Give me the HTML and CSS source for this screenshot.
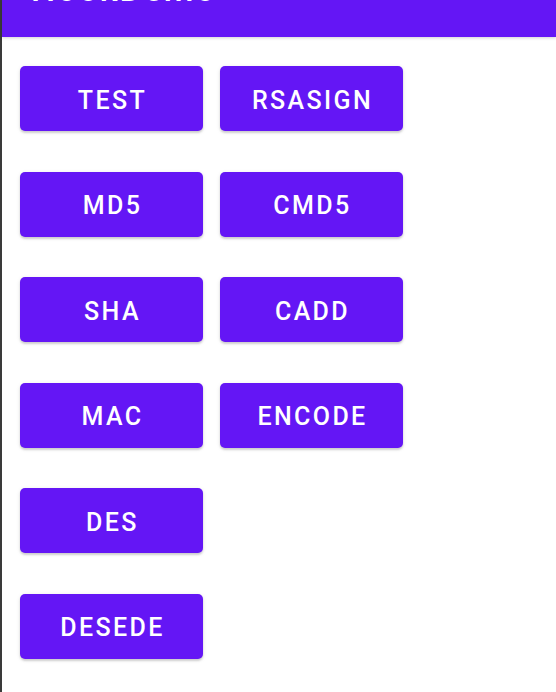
FILE: index.html
```html
<!DOCTYPE html>
<html>
<head>
<meta charset="utf-8">
<link rel="stylesheet" href="styles.css">
</head>
<body>
<div class="frame">
  <header class="appbar"><span class="title">HookDemo</span></header>
  <main class="grid">
    <button class="btn">TEST</button>
    <button class="btn">RSASIGN</button>
    <button class="btn">MD5</button>
    <button class="btn">CMD5</button>
    <button class="btn">SHA</button>
    <button class="btn">CADD</button>
    <button class="btn">MAC</button>
    <button class="btn">ENCODE</button>
    <button class="btn">DES</button>
    <span></span>
    <button class="btn">DESEDE</button>
  </main>
</div>
</body>
</html>
```
FILE: styles.css
```css
html, body { margin: 0; padding: 0; height: 100%; overflow: hidden; background: #fff; }
.frame {
  height: 100%;
  border-left: 2px solid #3a3a3a;
  font-family: Roboto, "Liberation Sans", sans-serif;
}
.appbar {
  height: 37px;
  background: #6416f5;
  box-shadow: 0 1px 3px rgba(0,0,0,0.18);
  overflow: hidden;
  position: relative;
  z-index: 1;
}
.title {
  display: block;
  margin: -31px 0 0 29px;
  color: #fff;
  font-size: 34px;
  font-weight: 500;
  line-height: 40px;
  letter-spacing: 2px;
}
.grid {
  display: grid;
  grid-template-columns: 183px 183px;
  grid-auto-rows: 65px;
  column-gap: 17px;
  row-gap: 40.6px;
  padding: 29px 0 0 18px;
}
.btn {
  border: none;
  border-radius: 5px;
  background: #6416f5;
  color: #fff;
  font-family: Roboto, "Liberation Sans", sans-serif;
  font-weight: 500;
  font-size: 25px;
  letter-spacing: 2.4px;
  padding: 3px 0 0 2px;
  box-shadow: 0 2px 2px rgba(0,0,0,0.14), 0 1px 4px rgba(0,0,0,0.1);
}
```
